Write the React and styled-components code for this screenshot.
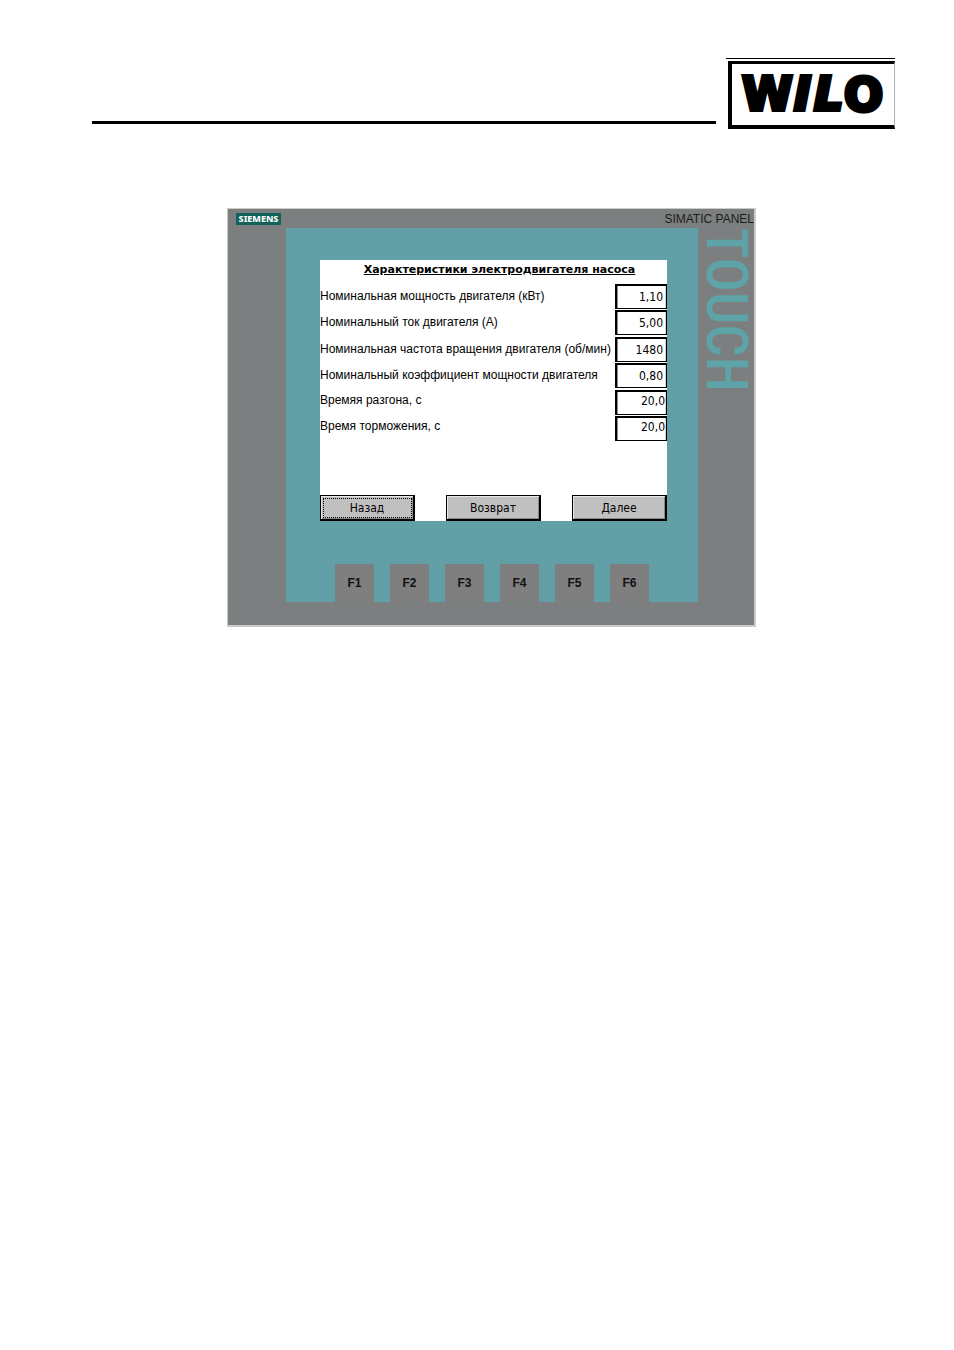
import React from 'react';
import styled, { createGlobalStyle } from 'styled-components';

const GlobalStyle = createGlobalStyle`
  * {
    box-sizing: border-box;
  }

  body {
    margin: 0;
    background: #ffffff;
    color: #000000;
    font-family: 'Liberation Sans', Arial, sans-serif;
  }
`;

const Page = styled.div`
  padding-top: 58px;
`;

const Header = styled.header`
  display: flex;
  align-items: flex-end;
  gap: 10px;
  padding: 0 59px 0 92px;
`;

const HeaderRule = styled.div`
  flex: 1;
  height: 3px;
  margin-bottom: 5px;
  background: #000000;
`;

const LogoBlock = styled.div`
  padding: 2px 0 0 2px;
  border-top: 1px solid #000000;
`;

const LogoFrame = styled.div`
  display: flex;
  width: 167px;
  height: 68px;
  border: solid #000000;
  border-width: 3px 1px 4px 4px;
  border-right-color: #b0b0b0;
`;

const Main = styled.main`
  display: flex;
  justify-content: center;
  padding: 79px 63px 0 92px;
`;

const Panel = styled.section`
  display: grid;
  grid-template-columns: 58px minmax(0, 1fr) 56px;
  grid-template-rows: 19px auto 23px;
  width: 100%;
  max-width: 529px;
  border: solid #cfcac4;
  border-width: 1px 2px 2px 1px;
  background: #7c7f7f;
`;

const PanelTop = styled.div`
  grid-column: 1 / -1;
  display: flex;
  justify-content: space-between;
  align-items: center;
  padding-left: 8px;
`;

const Siemens = styled.span`
  width: 45px;
  background: #11635a;
  color: #ffffff;
  font-family: 'Noto Sans', sans-serif;
  font-size: 9px;
  font-weight: 800;
  line-height: 12px;
  text-align: center;
`;

const PanelName = styled.span`
  color: #1c1c1c;
  font-size: 12px;
  line-height: 18px;
`;

const Bezel = styled.div`
  grid-column: 2;
  display: flex;
  flex-direction: column;
  justify-content: space-between;
  min-height: 374px;
  padding: 32px 31px 0 34px;
  background: #629fa6;
`;

const Touch = styled.div`
  font-family: 'Roboto Condensed', 'Liberation Sans', sans-serif;
  font-size: 57px;
  font-weight: 500;
  line-height: 56px;
  color: #5da3a8;
  writing-mode: vertical-rl;
`;

const Screen = styled.form`
  display: flex;
  flex-direction: column;
  height: 261px;
  background: #ffffff;
`;

const Title = styled.h1`
  margin: 0;
  padding: 2px 0 0 12px;
  font-family: 'DejaVu Sans', sans-serif;
  font-size: 11px;
  font-weight: bold;
  line-height: 16px;
  text-align: center;
  text-decoration: underline;
`;

const Fields = styled.div`
  display: flex;
  flex-direction: column;
  justify-content: space-between;
  height: 157px;
  margin-top: 6px;
`;

const Field = styled.label`
  display: flex;
  justify-content: space-between;
  height: 25px;
  font-size: 12px;
  line-height: ${(p) => (p.$raised ? '20px' : '24px')};
  white-space: nowrap;
`;

const Value = styled.input`
  flex: none;
  width: 52px;
  height: 25px;
  padding: ${(p) => (p.$raised ? '0 1px 4px 0' : '0 3px 0 0')};
  border: solid #000000;
  border-width: 2px 1px 1px 2px;
  border-radius: 0;
  outline: none;
  background: #ffffff;
  box-shadow: inset 1px 0 #8a8a8a, inset -1px 0 #d8d8d8;
  font-family: 'DejaVu Sans Condensed', 'DejaVu Sans', sans-serif;
  font-size: 12px;
  text-align: right;
`;

const Actions = styled.div`
  display: flex;
  justify-content: space-between;
  margin-top: auto;
`;

const ActionButton = styled.button`
  width: 95px;
  height: 26px;
  padding: 0;
  border: solid #000000;
  border-width: 1px 2px 2px 1px;
  background: #c0c0c0;
  box-shadow: inset 1px 1px #e8e8e8, inset -1px -1px #8a8a8a;
  color: #000000;
  font-family: 'DejaVu Sans Condensed', 'DejaVu Sans', sans-serif;
  font-size: 12px;
  line-height: 16px;

  ${(p) => p.$focused && `
    outline: 1px dotted #000000;
    outline-offset: -4px;
  `}
`;

const Keys = styled.div`
  display: flex;
  justify-content: center;
  gap: 16px;
  padding-right: 3px;
`;

const Key = styled.button`
  width: 39px;
  height: 38px;
  padding: 0;
  border: 0;
  background: #7f7f7f;
  color: #111111;
  font-family: inherit;
  font-size: 12px;
  font-weight: bold;
`;

const fields = [
  { label: 'Номинальная мощность двигателя (кВт)', value: '1,10' },
  { label: 'Номинальный ток двигателя (А)', value: '5,00' },
  { label: 'Номинальная частота вращения двигателя (об/мин)', value: '1480' },
  { label: 'Номинальный коэффициент мощности двигателя', value: '0,80' },
  { label: 'Времяя разгона, с', value: '20,0', raised: true },
  { label: 'Время торможения, с', value: '20,0', raised: true },
];

const keys = ['F1', 'F2', 'F3', 'F4', 'F5', 'F6'];

const Logo = () => (
  <svg width="162" height="61" viewBox="0 0 162 61" role="img" aria-label="WILO">
    <g fontFamily="DejaVu Sans, sans-serif" fontWeight="bold" fontSize="46" stroke="#000" strokeWidth="4">
      <text x="10" y="46">W</text>
      <text x="62" y="46" fontStyle="italic">I</text>
      <text x="82" y="46" fontStyle="italic">L</text>
      <text x="112" y="47">O</text>
    </g>
  </svg>
);

function App() {
  return (
    <>
      <GlobalStyle />
      <Page>
        <Header>
          <HeaderRule />
          <LogoBlock>
            <LogoFrame>
              <Logo />
            </LogoFrame>
          </LogoBlock>
        </Header>
        <Main>
          <Panel>
            <PanelTop>
              <Siemens>SIEMENS</Siemens>
              <PanelName>SIMATIC PANEL</PanelName>
            </PanelTop>
            <Bezel>
              <Screen>
                <Title>Характеристики электродвигателя насоса</Title>
                <Fields>
                  {fields.map((f) => (
                    <Field key={f.label} $raised={f.raised}>
                      {f.label}
                      <Value defaultValue={f.value} $raised={f.raised} />
                    </Field>
                  ))}
                </Fields>
                <Actions>
                  <ActionButton type="button" $focused>Назад</ActionButton>
                  <ActionButton type="button">Возврат</ActionButton>
                  <ActionButton type="button">Далее</ActionButton>
                </Actions>
              </Screen>
              <Keys>
                {keys.map((k) => (
                  <Key key={k} type="button">{k}</Key>
                ))}
              </Keys>
            </Bezel>
            <Touch>TOUCH</Touch>
          </Panel>
        </Main>
      </Page>
    </>
  );
}

export default App;
